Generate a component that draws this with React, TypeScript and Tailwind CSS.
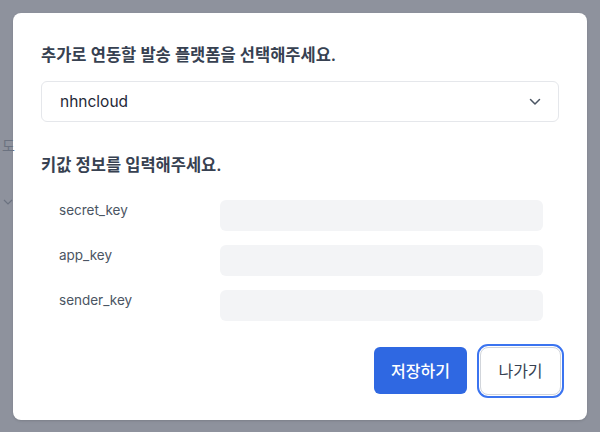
import React from "react";

const font = { fontFamily: 'Inter, "Noto Sans CJK KR", sans-serif' };

function Row({ label }: { label: string }) {
  return (
    <div className="flex items-start">
      <div className="w-[161px] shrink-0 text-[13.5px] leading-[20px] text-[#4b5563]">{label}</div>
      <div className="h-[31px] w-[323px] rounded-md bg-[#f3f4f6]" />
    </div>
  );
}

export default function App() {
  return (
    <div className="relative h-[432px] w-[600px] overflow-hidden bg-[#8e929d]" style={font}>
      <div className="absolute left-[2px] top-[135px] text-[14px] text-[#6b7280]">도</div>
      <svg className="absolute left-[3px] top-[198px]" width="10" height="8" viewBox="0 0 10 8" fill="none">
        <path d="M1 2l4 4 4-4" stroke="#6b7280" strokeWidth="1.2" />
      </svg>
      <div className="p-[13px]">
        <div className="flex h-[407px] w-[574px] flex-col rounded-lg bg-white px-[28px] pt-[30px] shadow-sm">
          <h2 className="text-[16.5px] font-semibold leading-[24px] text-[#374151]">추가로 연동할 발송 플랫폼을 선택해주세요.</h2>
          <div className="mt-[14px] flex h-[41px] items-center justify-between rounded-md border border-[#e5e7eb] pl-[18px] pr-[17px]">
            <span className="text-[15.5px] text-[#1f2937]">nhncloud</span>
            <svg width="12" height="8" viewBox="0 0 12 8" fill="none">
              <path d="M1.5 1.5L6 6l4.5-4.5" stroke="#4b5563" strokeWidth="1.5" strokeLinecap="round" strokeLinejoin="round" />
            </svg>
          </div>
          <h2 className="mt-[31px] text-[16.5px] font-semibold leading-[24px] text-[#374151]">키값 정보를 입력해주세요.</h2>
          <div className="mt-[23px] flex flex-col gap-[14px] pl-[18px]">
            <Row label="secret_key" />
            <Row label="app_key" />
            <Row label="sender_key" />
          </div>
          <div className="mt-auto mb-[25px] flex justify-end gap-[13px]">
            <button className="h-[47px] w-[93px] rounded-md bg-[#2f68e2] text-[16px] font-medium text-white">저장하기</button>
            <button className="mr-[-2px] h-[48px] w-[81px] rounded-lg border border-[#d1d5db] bg-white text-[16px] text-[#374151] outline outline-[2.5px] outline-offset-[1px] outline-[#3b74f0]">나가기</button>
          </div>
        </div>
      </div>
    </div>
  );
}
